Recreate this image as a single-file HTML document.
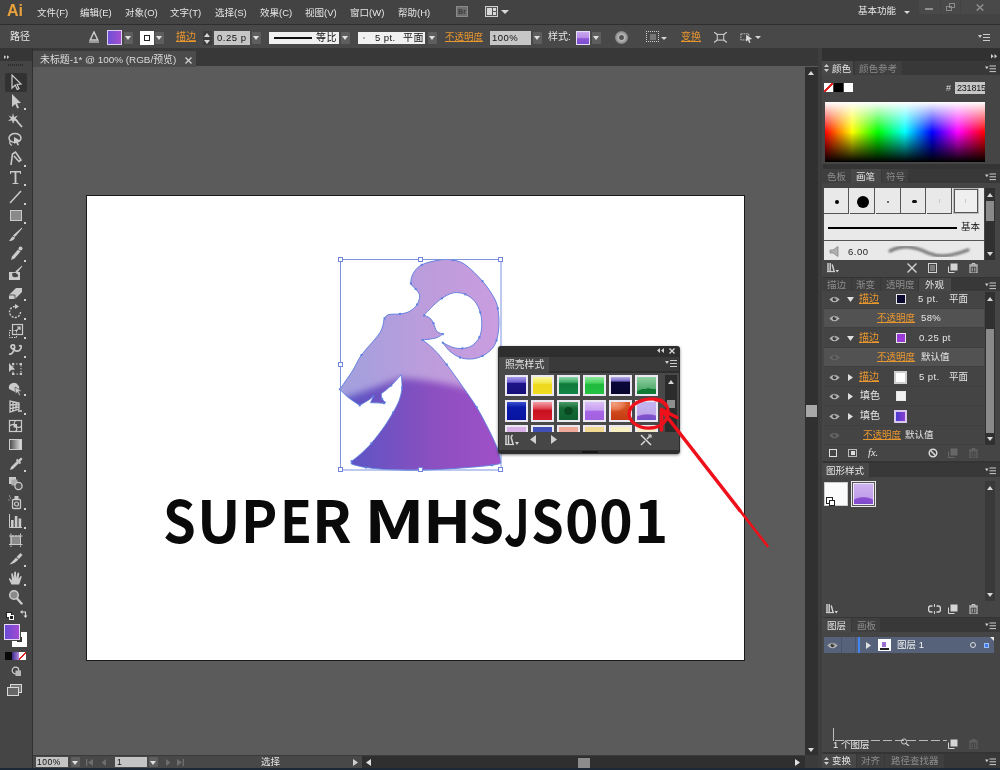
<!DOCTYPE html>
<html lang="zh-CN">
<head>
<meta charset="utf-8">
<title>未标题-1* @ 100% (RGB/预览)</title>
<style>
html,body{margin:0;padding:0;}
body{width:1000px;height:770px;overflow:hidden;background:#5b5b5b;position:relative;font-family:"Liberation Sans","Noto Sans CJK SC",sans-serif;font-size:12px;color:#e6e6e6;}
.abs{position:absolute;}
.t{position:absolute;white-space:nowrap;line-height:14px;font-size:10px;}
.or{color:#e8962e;text-decoration:underline;}
#menubar{left:0;top:0;width:1000px;height:24px;background:#434343;}
#ctrlbar{left:0;top:24px;width:1000px;height:24px;background:#484848;border-top:1px solid #2e2e2e;box-sizing:border-box;}
#tabbar{left:0;top:48px;width:822px;height:18px;background:#383838;}
#tab{left:33px;top:51px;width:163px;height:16px;background:#4b4b4b;}
#tools{left:0;top:48px;width:33px;height:722px;background:#454545;}
#canvas{left:33px;top:67px;width:772px;height:688px;background:#5b5b5b;}
#artboard{left:86px;top:195px;width:659px;height:466px;background:#fff;border:1px solid #1a1a1a;box-sizing:border-box;}
#vscroll{left:805px;top:67px;width:13px;height:688px;background:#303030;}
#status{left:33px;top:755px;width:785px;height:15px;background:#3b3b3b;}
#dock{left:818px;top:48px;width:182px;height:722px;background:#3a3a3a;}

.m{top:6px;font-size:9.5px;}
.tri{width:0;height:0;border-style:solid;border-color:#d8d8d8 transparent transparent transparent;border-width:4px 4px 0 4px;}
.tri.up{border-color:transparent transparent #d8d8d8 transparent;border-width:0 4px 4px 4px;}
.dd{width:9px;height:12px;background:#5e5e5e;border-radius:1px;}
.dd:after{content:"";position:absolute;left:1px;top:4px;border-style:solid;border-color:#e0e0e0 transparent transparent transparent;border-width:4px 3.5px 0 3.5px;}
.inp{height:14px;background:#c6c6c6;color:#111;font-size:9.5px;line-height:14px;padding-left:2px;box-sizing:border-box;white-space:nowrap;overflow:hidden;font-family:"Liberation Sans","Noto Sans CJK SC",sans-serif;letter-spacing:0.5px;}
.inp.w{background:#f0f0f0;padding:0;font-family:"Liberation Sans","Noto Sans CJK SC",sans-serif;font-size:10px;line-height:14px;overflow:visible;}
.bl{position:absolute;top:0;transform-origin:0 0;display:block;}
</style>
</head>
<body><div id="root" style="position:absolute;left:0;top:0;width:1000px;height:770px;will-change:transform;">
<div id="menubar" class="abs"></div>
<div id="ctrlbar" class="abs"></div>
<div id="tabbar" class="abs"></div>
<div id="canvas" class="abs"></div>
<div id="artboard" class="abs"></div>
<div id="tab" class="abs"></div>
<div id="tools" class="abs"></div>
<div id="vscroll" class="abs"></div>
<div id="status" class="abs"></div>
<div id="dock" class="abs"></div>

<div class="abs" style="left:7px;top:0px;font:bold 16px/21px 'Liberation Sans',sans-serif;color:#e9a23b;letter-spacing:0px;">Ai</div>
<div class="t m" style="left:37px;">文件(F)</div>
<div class="t m" style="left:80px;">编辑(E)</div>
<div class="t m" style="left:125px;">对象(O)</div>
<div class="t m" style="left:170px;">文字(T)</div>
<div class="t m" style="left:215px;">选择(S)</div>
<div class="t m" style="left:260px;">效果(C)</div>
<div class="t m" style="left:305px;">视图(V)</div>
<div class="t m" style="left:350px;">窗口(W)</div>
<div class="t m" style="left:398px;">帮助(H)</div>
<div class="abs" style="left:456px;top:6px;width:12px;height:11px;background:#6e6e6e;border:1px solid #8a8a8a;box-sizing:border-box;font:bold 7px/9px 'Liberation Sans',sans-serif;color:#3a3a3a;text-align:center;">Br</div>
<div class="abs" style="left:485px;top:6px;width:13px;height:11px;border:1px solid #cfcfcf;box-sizing:border-box;background:#555;"><div class="abs" style="left:1px;top:1px;width:5px;height:7px;background:#d8d8d8;"></div><div class="abs" style="left:7px;top:1px;width:3px;height:3px;background:#d8d8d8;"></div><div class="abs" style="left:7px;top:5px;width:3px;height:3px;background:#d8d8d8;"></div></div>
<div class="abs tri" style="left:501px;top:10px;"></div>
<div class="t" style="left:858px;top:4px;font-size:9.5px;">基本功能</div>
<div class="abs tri" style="left:904px;top:11px;border-width:3px 3px 0 3px;"></div>
<div class="abs" style="left:919px;top:0px;width:21px;height:14px;background:#494949;"></div>
<div class="abs" style="left:941px;top:0px;width:19px;height:14px;background:#494949;"></div>
<div class="abs" style="left:961px;top:0px;width:39px;height:14px;background:#494949;"></div>
<div class="abs" style="left:925px;top:8px;width:8px;height:2px;background:#8e8e8e;"></div>
<div class="abs" style="left:946px;top:6px;width:6px;height:5px;border:1.5px solid #8a8a8a;box-sizing:border-box;"></div>
<div class="abs" style="left:949px;top:3px;width:6px;height:5px;border:1.5px solid #8a8a8a;box-sizing:border-box;"></div>
<svg class="abs" style="left:976px;top:4px;" width="8" height="7" viewBox="0 0 8 7"><path d="M0.7 0.5 L7.3 6.5 M7.3 0.5 L0.7 6.5" stroke="#8c8c8c" stroke-width="1.6" fill="none"/></svg>


<div class="t" style="left:10px;top:30px;">路径</div>
<svg class="abs" style="left:89px;top:31px;" width="10" height="12" viewBox="0 0 10 12"><path d="M1.2 9 L5 1 L8.8 9 Z" fill="none" stroke="#d0d0d0" stroke-width="1.4"/><path d="M0 11 H10" stroke="#d0d0d0" stroke-width="1.2"/></svg>
<div class="abs" style="left:107px;top:30px;width:15px;height:15px;box-sizing:border-box;border:1px solid #d9d0f0;background:linear-gradient(90deg,#6e4fd6,#a44fd0);"></div>
<div class="abs dd" style="left:124px;top:32px;"></div>
<div class="abs" style="left:140px;top:31px;width:14px;height:14px;background:#fff;"><div class="abs" style="left:4px;top:4px;width:6px;height:6px;box-sizing:border-box;border:1px solid #222;"></div></div>
<div class="abs dd" style="left:155px;top:32px;"></div>
<div class="t or" style="left:176px;top:30px;">描边</div>
<div class="abs" style="left:203px;top:31px;width:9px;height:14px;background:#3c3c3c;"></div><div class="abs tri up" style="left:204px;top:33px;border-width:0 3.5px 4px 3.5px;"></div>
<div class="abs tri" style="left:204px;top:40px;border-width:4px 3.5px 0 3.5px;"></div>
<div class="abs inp" style="left:214px;top:31px;width:36px;padding-left:3px;">0.25 p</div>
<div class="abs dd" style="left:252px;top:32px;"></div>
<div class="abs inp w" style="left:269px;top:32px;width:70px;height:12px;"><div class="abs" style="left:5px;top:5px;width:38px;height:2px;background:#111;"></div><span class="abs" style="left:47px;top:-1px;">等比</span></div>
<div class="abs dd" style="left:341px;top:32px;"></div>
<div class="abs inp w" style="left:358px;top:32px;width:67px;height:12px;"><span class="abs" style="left:17px;top:-1px;font-family:'Liberation Sans','Noto Sans CJK SC',sans-serif;font-size:9.5px;letter-spacing:0.4px;">5 pt.</span><span class="abs" style="left:45px;top:-1px;">平面</span><span class="abs" style="left:5px;top:5px;width:2px;height:2px;background:#999;border-radius:1px;"></span></div>
<div class="abs dd" style="left:428px;top:32px;"></div>
<div class="t or" style="left:445px;top:30px;font-size:9.5px;">不透明度</div>
<div class="abs inp" style="left:490px;top:31px;width:41px;">100%</div>
<div class="abs dd" style="left:533px;top:32px;"></div>
<div class="t" style="left:548px;top:30px;">样式:</div>
<div class="abs" style="left:576px;top:31px;width:14px;height:14px;box-sizing:border-box;border:1px solid #e6dcf7;background:linear-gradient(180deg,#c9a8f0 0%,#b48ae6 50%,#8d55d6 55%,#7a4fd0 100%);"></div>
<div class="abs dd" style="left:592px;top:32px;"></div>
<div class="abs" style="left:615px;top:31px;width:13px;height:13px;border-radius:7px;background:radial-gradient(circle at 50% 50%,#555 0,#555 2px,#b8b8b8 3px,#8a8a8a 6px);"></div>
<div class="abs" style="left:646px;top:31px;width:13px;height:11px;box-sizing:border-box;border:1px dotted #d0d0d0;"><div class="abs" style="left:3px;top:2px;width:6px;height:6px;background:#777;"></div></div>
<div class="abs tri" style="left:661px;top:37px;border-width:3px 3px 0 3px;"></div>
<div class="t or" style="left:681px;top:30px;">变换</div>
<svg class="abs" style="left:714px;top:32px;" width="13" height="10.5" viewBox="0 0 16 13"><rect x="4" y="3" width="8" height="7" fill="none" stroke="#ccc" stroke-width="1.3"/><path d="M0 0 L4 3 M16 0 L12 3 M0 13 L4 10 M16 13 L12 10" stroke="#ccc" stroke-width="1.4"/></svg>
<svg class="abs" style="left:740px;top:32px;" width="14" height="11.5" viewBox="0 0 16 13"><rect x="1" y="2" width="9" height="7" fill="none" stroke="#ccc" stroke-width="1" stroke-dasharray="2 1"/><path d="M7 3 L14 8 L10.5 8.5 L12 12 L10.5 12.5 L9 9 L7 11 Z" fill="#ddd"/></svg>
<div class="abs tri" style="left:755px;top:36px;border-width:3.5px 3px 0 3px;"></div>
<svg class="abs" style="left:978px;top:33px;" width="12" height="9" viewBox="0 0 12 9"><path d="M0 2 L4 2 L2 5 Z" fill="#ccc"/><path d="M5 1.5 H12 M5 4.5 H12 M5 7.5 H12" stroke="#ccc" stroke-width="1"/></svg>


<div class="t" style="left:40px;top:53px;font-size:9.9px;color:#dcdcdc;">未标题-1* @ 100% (RGB/预览)</div>
<svg class="abs" style="left:185px;top:57px;" width="7" height="7" viewBox="0 0 7 7"><path d="M0.5 0.5 L6.5 6.5 M6.5 0.5 L0.5 6.5" stroke="#d0d0d0" stroke-width="1.3"/></svg>
<!--TOOLS_BEGIN-->
<div class="abs" style="left:0;top:48px;width:33px;height:13px;background:#363636;"></div>
<div class="abs" style="left:32px;top:48px;width:1px;height:722px;background:#2f2f2f;"></div>
<svg class="abs" style="left:4px;top:54.5px;" width="6" height="4" viewBox="0 0 8 5"><path d="M0 0 L3 2.5 L0 5 Z M4 0 L7 2.5 L4 5 Z" fill="#cfcfcf"/></svg>
<div class="abs" style="left:8px;top:64px;width:15px;height:2px;background:repeating-linear-gradient(90deg,#2a2a2a 0 1px,transparent 1px 2px);"></div>
<div class="abs" style="left:5px;top:73px;width:22px;height:19px;background:#323232;border-radius:2px;"></div>
<svg class="abs" style="left:6px;top:74px;" width="19" height="17" viewBox="0 0 19 17"><path d="M6 1 L6 14 L9.2 11 L11.2 15.5 L13 14.7 L11 10.3 L15 10 Z" fill="none" stroke="#cacaca" stroke-width="1.2"/></svg>
<svg class="abs" style="left:6px;top:93px;" width="19" height="17" viewBox="0 0 19 17"><path d="M6 1 L6 14 L9.2 11 L11.2 15.5 L13 14.7 L11 10.3 L15 10 Z" fill="#cacaca"/></svg>
<div class="abs" style="left:24px;top:108px;width:2px;height:2px;background:#cfcfcf;"></div>
<svg class="abs" style="left:6px;top:112px;" width="19" height="17" viewBox="0 0 19 17"><path d="M9 7 L16 15" stroke="#cacaca" stroke-width="1.8"/><path d="M7 1 L8 5 L12 3.5 L9.5 6.5 L12.5 9 L8.5 8.5 L7 12 L6 8.5 L2 9 L5 6.5 L2.5 3.5 L6 5 Z" fill="#cacaca"/></svg>
<svg class="abs" style="left:6px;top:131px;" width="19" height="17" viewBox="0 0 19 17"><ellipse cx="9" cy="7" rx="6" ry="4.5" fill="none" stroke="#cacaca" stroke-width="1.5"/><path d="M8 6 L15 10 L11.5 10.5 L13 14 L11.5 14.6 L10 11.2 L8 13 Z" fill="#cacaca"/><path d="M4 10 Q3 13 6 14.5" stroke="#cacaca" fill="none" stroke-width="1.2"/></svg>
<svg class="abs" style="left:6px;top:150px;" width="19" height="17" viewBox="0 0 19 17"><path d="M5 15 L6.5 4 L9.5 2 L15 10 L13 11.5 L8 6" fill="none" stroke="#cacaca" stroke-width="1.6"/></svg>
<div class="abs" style="left:24px;top:165px;width:2px;height:2px;background:#cfcfcf;"></div>
<svg class="abs" style="left:6px;top:169px;" width="19" height="17" viewBox="0 0 19 17"><path d="M4 2 H15 V5 H14 V3.4 H10.4 V14 H12.4 V15 H6.6 V14 H8.6 V3.4 H5 V5 H4 Z" fill="#cacaca"/></svg>
<div class="abs" style="left:24px;top:184px;width:2px;height:2px;background:#cfcfcf;"></div>
<svg class="abs" style="left:6px;top:188px;" width="19" height="17" viewBox="0 0 19 17"><path d="M4 15 L15 3" stroke="#cacaca" stroke-width="1.5"/></svg>
<div class="abs" style="left:24px;top:203px;width:2px;height:2px;background:#cfcfcf;"></div>
<svg class="abs" style="left:6px;top:207px;" width="19" height="17" viewBox="0 0 19 17"><rect x="4.5" y="3.5" width="11" height="10" fill="#8a8a8a" stroke="#cacaca" stroke-width="1"/></svg>
<div class="abs" style="left:24px;top:222px;width:2px;height:2px;background:#cfcfcf;"></div>
<svg class="abs" style="left:6px;top:226px;" width="19" height="17" viewBox="0 0 19 17"><path d="M16 2 L9 10.5 L7.5 9.5 Z" fill="#cacaca" stroke="#cacaca" stroke-width="1"/><path d="M3 15 Q7 15.5 9 12 Q8 10 6.5 10.5 Q5 12 3 15 Z" fill="#cacaca"/></svg>
<svg class="abs" style="left:6px;top:245px;" width="19" height="17" viewBox="0 0 19 17"><path d="M5 15 L6 11.5 L12 4.5 L14.5 6.5 L8.5 13.5 Z" fill="#cacaca"/><circle cx="14.5" cy="3.5" r="2" fill="#cacaca"/></svg>
<div class="abs" style="left:24px;top:260px;width:2px;height:2px;background:#cfcfcf;"></div>
<svg class="abs" style="left:6px;top:264px;" width="19" height="17" viewBox="0 0 19 17"><path d="M3 8 H14 V16 H3 Z" fill="#cacaca"/><path d="M6 9.5 Q9 8 11 10 Q13 11 12 12.5 Q9 14 6.5 12.5 Z" fill="#444"/><path d="M16 2 L11 8.5 L9.8 7.6 Z" fill="#cacaca" stroke="#cacaca"/></svg>
<svg class="abs" style="left:6px;top:284px;" width="19" height="17" viewBox="0 0 19 17"><path d="M3 11 L10 4 L16 4 L16 8 L9 15 L3 15 Z" fill="#cacaca"/><path d="M3 11 H9 V15" fill="none" stroke="#555" stroke-width="1"/></svg>
<div class="abs" style="left:24px;top:299px;width:2px;height:2px;background:#cfcfcf;"></div>
<svg class="abs" style="left:6px;top:303px;" width="19" height="17" viewBox="0 0 19 17"><path d="M14.5 9 A5.5 5.5 0 1 1 9 3.5" fill="none" stroke="#cacaca" stroke-width="1.4" stroke-dasharray="2 1.3"/><path d="M9 1 L13 3.5 L9 6 Z" fill="#cacaca"/></svg>
<div class="abs" style="left:24px;top:318px;width:2px;height:2px;background:#cfcfcf;"></div>
<svg class="abs" style="left:6px;top:322px;" width="19" height="17" viewBox="0 0 19 17"><rect x="3.5" y="8.5" width="7" height="7" fill="none" stroke="#cacaca" stroke-width="1" stroke-dasharray="1.5 1"/><rect x="6.5" y="2.5" width="10" height="10" fill="none" stroke="#cacaca" stroke-width="1.2"/><path d="M10 9 L14 5 M11 5 H14 V8" stroke="#cacaca" stroke-width="1.2" fill="none"/></svg>
<div class="abs" style="left:24px;top:337px;width:2px;height:2px;background:#cfcfcf;"></div>
<svg class="abs" style="left:6px;top:341px;" width="19" height="17" viewBox="0 0 19 17"><path d="M3 13 Q6 14 8 9 Q10 3 6 4 Q3 6 8 9 Q13 12 15 7 Q16 4 13 5" fill="none" stroke="#cacaca" stroke-width="1.8"/></svg>
<div class="abs" style="left:24px;top:356px;width:2px;height:2px;background:#cfcfcf;"></div>
<svg class="abs" style="left:6px;top:360px;" width="19" height="17" viewBox="0 0 19 17"><rect x="7" y="4" width="8" height="10" fill="none" stroke="#cacaca" stroke-width="1" stroke-dasharray="1.5 1.5"/><path d="M3 3 L3 12 L5.5 9.8 L9 9.5 Z" fill="#cacaca"/><rect x="6" y="3" width="2" height="2" fill="#cacaca"/><rect x="14" y="3" width="2" height="2" fill="#cacaca"/><rect x="14" y="13" width="2" height="2" fill="#cacaca"/><rect x="6" y="13" width="2" height="2" fill="#cacaca"/></svg>
<svg class="abs" style="left:6px;top:379px;" width="19" height="17" viewBox="0 0 19 17"><path d="M3 10 A5 5 0 0 1 12 6 A4 4 0 0 1 9 13 Z" fill="#cacaca"/><path d="M9 8 L16 12 L12.8 12.5 L14.5 16 L13 16.5 L11.5 13.3 L9.5 15 Z" fill="#cacaca" stroke="#444" stroke-width=".6"/></svg>
<div class="abs" style="left:24px;top:394px;width:2px;height:2px;background:#cfcfcf;"></div>
<svg class="abs" style="left:6px;top:398px;" width="19" height="17" viewBox="0 0 19 17"><path d="M4 3 V14 L13 11 V5 Z M4 6.5 L13 7 M4 10.5 L13 9 M7 3.6 V13 M10 4.3 V12" fill="none" stroke="#cacaca" stroke-width="1.3"/><path d="M12 13 H16" stroke="#cacaca" stroke-width="1.6"/></svg>
<div class="abs" style="left:24px;top:413px;width:2px;height:2px;background:#cfcfcf;"></div>
<svg class="abs" style="left:6px;top:417px;" width="19" height="17" viewBox="0 0 19 17"><rect x="3.5" y="3.5" width="12" height="11" fill="none" stroke="#cacaca" stroke-width="1.2"/><path d="M3.5 9 Q7 6 10 9 T15.5 9 M9.5 3.5 Q7 7 9.5 9.5 T9.5 14.5" fill="none" stroke="#cacaca" stroke-width="1.2"/><rect x="7.5" y="7" width="3.5" height="3.5" fill="#cacaca"/></svg>
<svg class="abs" style="left:6px;top:436px;" width="19" height="17" viewBox="0 0 19 17"><defs><linearGradient id="tg" x1="0" x2="1"><stop offset="0" stop-color="#4a4a4a"/><stop offset="1" stop-color="#e4e4e4"/></linearGradient></defs><rect x="3.5" y="3.5" width="12" height="10" fill="url(#tg)" stroke="#cacaca" stroke-width="1"/></svg>
<svg class="abs" style="left:6px;top:455px;" width="19" height="17" viewBox="0 0 19 17"><path d="M4 15 L5 12 L11 6 L13 8 L7 14 Z" fill="#cacaca"/><path d="M10.5 4.5 L14.5 8.5" stroke="#cacaca" stroke-width="1.8"/><path d="M12 5 L15 2.5 L16.5 4 L14 7 Z" fill="#cacaca"/></svg>
<div class="abs" style="left:24px;top:470px;width:2px;height:2px;background:#cfcfcf;"></div>
<svg class="abs" style="left:6px;top:474px;" width="19" height="17" viewBox="0 0 19 17"><rect x="3" y="3" width="7" height="7" fill="#cacaca"/><rect x="5.5" y="5.5" width="6" height="6" fill="#aaa"/><circle cx="12.5" cy="12" r="3.6" fill="#555" stroke="#cacaca" stroke-width="1.3"/></svg>
<svg class="abs" style="left:6px;top:493px;" width="19" height="17" viewBox="0 0 19 17"><rect x="6.5" y="6.5" width="8" height="9" rx="1" fill="none" stroke="#cacaca" stroke-width="1.3"/><rect x="8.5" y="3" width="4" height="3.5" fill="#cacaca"/><circle cx="10.5" cy="11" r="2" fill="none" stroke="#cacaca" stroke-width="1.2"/><path d="M3 3 h1 M4 5 h1 M2.5 7 h1" stroke="#cacaca" stroke-width="1"/></svg>
<div class="abs" style="left:24px;top:508px;width:2px;height:2px;background:#cfcfcf;"></div>
<svg class="abs" style="left:6px;top:512px;" width="19" height="17" viewBox="0 0 19 17"><path d="M3.5 2 V15.5 H16" fill="none" stroke="#cacaca" stroke-width="1"/><rect x="5" y="8" width="2.6" height="7" fill="#cacaca"/><rect x="8.8" y="4" width="2.6" height="11" fill="#cacaca"/><rect x="12.6" y="6.5" width="2.6" height="8.5" fill="#cacaca"/></svg>
<div class="abs" style="left:24px;top:527px;width:2px;height:2px;background:#cfcfcf;"></div>
<svg class="abs" style="left:6px;top:531px;" width="19" height="17" viewBox="0 0 19 17"><rect x="5" y="5" width="9.5" height="8.5" fill="#8a8a8a" stroke="#cacaca" stroke-width="1"/><path d="M3 5 H16.5 M3 13.5 H16.5 M5 2.5 V16 M14.5 2.5 V16" stroke="#cacaca" stroke-width="1" stroke-dasharray="2 1"/></svg>
<svg class="abs" style="left:6px;top:550px;" width="19" height="17" viewBox="0 0 19 17"><path d="M3.5 14.5 L10 7.5 L12.5 9.5 Q8 14 3.5 14.5 Z" fill="#cacaca"/><path d="M10.5 7 L14.5 3 L16.5 5 L13 9 Z" fill="#cacaca"/></svg>
<div class="abs" style="left:24px;top:565px;width:2px;height:2px;background:#cfcfcf;"></div>
<svg class="abs" style="left:6px;top:569px;" width="19" height="17" viewBox="0 0 19 17"><path d="M5.5 15.5 L3 10.5 Q2.6 9 4 9.3 L6 11.5 L5.2 4.8 Q5.8 3.6 6.8 4.6 L8 9 L8.2 3 Q9.2 1.9 10 3 L10.3 9 L11.6 3.8 Q12.7 3 13.2 4.2 L12.6 10 L14.6 7 Q15.9 6.7 15.6 8 L13.2 15.5 Z" fill="#cacaca"/></svg>
<div class="abs" style="left:24px;top:584px;width:2px;height:2px;background:#cfcfcf;"></div>
<svg class="abs" style="left:6px;top:588px;" width="19" height="17" viewBox="0 0 19 17"><circle cx="8" cy="7" r="4.3" fill="#8a8a8a" stroke="#cacaca" stroke-width="1.5"/><path d="M11 10.5 L15.5 15.5" stroke="#cacaca" stroke-width="2.4" stroke-linecap="round"/></svg>
<div class="abs" style="left:6px;top:612px;width:4px;height:4px;background:#fff;border:1px solid #222;"></div><div class="abs" style="left:9px;top:615px;width:3px;height:3px;border:1px solid #fff;background:#222;"></div>
<svg class="abs" style="left:20px;top:610px;" width="8" height="8" viewBox="0 0 8 8"><path d="M1.5 2 H5.5 V6" fill="none" stroke="#d8d8d8" stroke-width="1.2"/><path d="M0 2 L2.5 0 V4 Z M5.5 8 L3.5 5.5 H7.5 Z" fill="#d8d8d8"/></svg>
<div class="abs" style="left:12px;top:632px;width:15px;height:15px;background:#fff;"><div class="abs" style="left:5px;top:5px;width:5px;height:5px;background:#333;"></div></div>
<div class="abs" style="left:4px;top:624px;width:16px;height:16px;box-sizing:border-box;border:1px solid #e3d9f5;background:linear-gradient(90deg,#6a4bd4,#a24ad0);box-shadow:0 0 0 1px #444;"></div>
<div class="abs" style="left:5px;top:652px;width:7px;height:8px;background:#0a0a0a;"></div>
<div class="abs" style="left:12px;top:652px;width:7px;height:8px;background:linear-gradient(90deg,#3a2a8a,#b48ae0);"></div>
<div class="abs" style="left:19px;top:652px;width:7px;height:8px;background:linear-gradient(135deg,#fff 42%,#e02020 42%,#e02020 58%,#fff 58%);"></div>
<svg class="abs" style="left:11px;top:666px;" width="11" height="11" viewBox="0 0 11 11"><circle cx="4.5" cy="4.5" r="3.3" fill="none" stroke="#cfcfcf" stroke-width="1.2"/><rect x="4.5" y="4.5" width="5.5" height="5.5" fill="#b8b8b8"/></svg>
<svg class="abs" style="left:7px;top:684px;" width="16" height="12" viewBox="0 0 16 12"><rect x="3.5" y="0.5" width="11" height="8" fill="#777" stroke="#d8d8d8"/><rect x="0.5" y="3.5" width="11" height="8" fill="#666" stroke="#d8d8d8"/></svg>
<!--TOOLS_END-->
<!--ART_BEGIN-->
<svg class="abs" style="left:0;top:0;" width="1000" height="770" viewBox="0 0 1000 770">
<defs>
<linearGradient id="gd" x1="345" x2="500" y1="0" y2="0" gradientUnits="userSpaceOnUse"><stop offset="0" stop-color="#5a55c4"/><stop offset="0.55" stop-color="#8a4fc0"/><stop offset="1" stop-color="#a050c8"/></linearGradient>
<linearGradient id="gl" x1="0" x2="0" y1="365" y2="395" gradientUnits="userSpaceOnUse"><stop offset="0" stop-color="#fff" stop-opacity="0.45"/><stop offset="1" stop-color="#fff" stop-opacity="0"/></linearGradient>
<clipPath id="cp"><path d="M410.9 283.5 C410.5 280.9 411.4 276.5 413.2 273.4 C415.0 270.3 417.5 267.0 421.8 264.8 C426.1 262.6 433.8 260.9 439.0 260.1 C444.2 259.3 448.6 259.3 453.0 260.1 C457.4 260.9 460.5 261.3 465.4 264.8 C470.3 268.3 477.8 275.9 482.5 281.2 C487.2 286.5 490.9 292.2 493.5 296.7 C496.1 301.2 496.9 303.7 497.8 308.4 C498.7 313.1 499.2 319.5 499.0 324.8 C498.8 330.1 497.8 336.3 496.6 340.3 C495.4 344.3 494.2 346.3 491.9 348.9 C489.5 351.5 485.9 354.2 482.5 355.9 C479.1 357.6 475.4 358.7 471.6 359.0 C467.9 359.3 463.6 358.8 460.0 357.5 C456.4 356.2 452.7 353.7 449.8 351.2 C446.9 348.7 442.8 342.7 442.8 342.7 C442.8 342.7 449.8 346.4 453.0 347.4 C456.2 348.3 459.2 348.7 462.3 348.4 C465.4 348.1 468.9 347.7 471.7 345.8 C474.5 343.9 477.7 340.7 479.4 337.2 C481.1 333.7 481.7 328.9 481.8 324.8 C481.9 320.7 481.4 316.2 480.2 312.3 C479.0 308.4 477.3 304.4 474.8 301.4 C472.3 298.4 468.9 295.8 465.4 294.4 C461.9 293.0 457.6 292.1 453.7 292.8 C449.8 293.5 445.8 295.8 442.0 298.3 C438.2 300.8 434.2 304.8 431.2 307.6 C428.2 310.5 424.1 315.4 424.1 315.4 C424.1 315.4 428.0 316.5 429.6 317.8 C431.2 319.1 432.3 321.0 433.5 323.2 C434.7 325.4 435.1 329.2 436.6 331.0 C438.2 332.8 442.8 334.1 442.8 334.1 C442.8 334.1 439.2 337.0 435.8 338.0 C432.4 339.0 422.6 340.0 422.6 340.0 C422.6 340.0 430.3 345.6 434.3 349.7 C438.3 353.8 441.9 358.2 446.7 364.5 C451.5 370.8 458.2 380.3 463.2 387.4 C468.2 394.5 472.5 400.3 476.7 407.2 C480.9 414.1 484.9 421.9 488.4 428.8 C491.8 435.7 495.3 442.9 497.4 448.6 C499.5 454.3 501.0 463.0 501.0 463.0 C501.0 463.0 499.5 464.3 492.0 465.2 C484.5 466.1 468.0 467.6 456.0 468.4 C444.0 469.2 430.5 470.0 420.0 470.2 C409.5 470.4 402.0 470.2 393.0 469.8 C384.0 469.4 373.0 468.5 366.0 467.5 C359.0 466.5 351.2 463.9 351.2 463.9 C351.2 463.9 351.6 461.2 351.6 461.2 C351.6 461.2 357.3 457.0 360.6 454.0 C363.9 451.0 367.5 447.7 371.4 443.2 C375.3 438.7 380.4 432.1 384.0 427.0 C387.6 421.9 390.4 417.1 393.0 412.6 C395.6 408.1 397.8 404.2 399.3 400.0 C400.8 395.8 401.7 391.6 402.0 387.4 C402.3 383.2 401.1 374.8 401.1 374.8 C401.1 374.8 394.5 382.5 391.2 385.6 C387.9 388.8 381.3 393.7 381.3 393.7 C381.3 393.7 381.4 397.6 382.2 399.1 C383.0 400.6 386.0 402.5 386.0 402.5 C386.0 402.5 384.0 403.2 384.0 403.2 C384.0 403.2 370.5 402.7 370.5 402.7 C370.5 402.7 373.2 396.4 373.2 396.4 C373.2 396.4 370.9 398.5 368.7 400.0 C366.4 401.5 359.7 405.4 359.7 405.4 C359.7 405.4 351.3 400.0 348.0 397.3 C344.7 394.6 339.9 389.2 339.9 389.2 C339.9 389.2 349.4 375.7 353.0 370.0 C356.6 364.3 357.0 361.2 361.5 355.0 C366.0 348.8 376.2 338.6 380.0 332.5 C383.8 326.4 383.0 321.5 384.5 318.5 C386.0 315.5 386.4 315.4 389.0 314.6 C391.6 313.8 396.6 314.4 400.0 313.9 C403.4 313.4 406.4 313.1 409.3 311.5 C412.2 309.9 415.4 307.2 417.1 304.5 C418.8 301.8 419.8 297.8 419.5 295.2 C419.2 292.6 417.0 290.8 415.6 288.9 C414.2 286.9 411.3 286.1 410.9 283.5Z"/></clipPath>
<filter id="bl" x="-10%" y="-10%" width="120%" height="120%"><feGaussianBlur stdDeviation="3.5"/></filter>
</defs>
<g clip-path="url(#cp)">
<rect x="335" y="255" width="175" height="220" fill="url(#gd)"/>
<path d="M320 240 H525 V410 Q470 383 401 378 L334 402 L320 406 Z" fill="#fff" fill-opacity="0.44" filter="url(#bl)"/>
</g>
<path d="M410.9 283.5 C410.5 280.9 411.4 276.5 413.2 273.4 C415.0 270.3 417.5 267.0 421.8 264.8 C426.1 262.6 433.8 260.9 439.0 260.1 C444.2 259.3 448.6 259.3 453.0 260.1 C457.4 260.9 460.5 261.3 465.4 264.8 C470.3 268.3 477.8 275.9 482.5 281.2 C487.2 286.5 490.9 292.2 493.5 296.7 C496.1 301.2 496.9 303.7 497.8 308.4 C498.7 313.1 499.2 319.5 499.0 324.8 C498.8 330.1 497.8 336.3 496.6 340.3 C495.4 344.3 494.2 346.3 491.9 348.9 C489.5 351.5 485.9 354.2 482.5 355.9 C479.1 357.6 475.4 358.7 471.6 359.0 C467.9 359.3 463.6 358.8 460.0 357.5 C456.4 356.2 452.7 353.7 449.8 351.2 C446.9 348.7 442.8 342.7 442.8 342.7 C442.8 342.7 449.8 346.4 453.0 347.4 C456.2 348.3 459.2 348.7 462.3 348.4 C465.4 348.1 468.9 347.7 471.7 345.8 C474.5 343.9 477.7 340.7 479.4 337.2 C481.1 333.7 481.7 328.9 481.8 324.8 C481.9 320.7 481.4 316.2 480.2 312.3 C479.0 308.4 477.3 304.4 474.8 301.4 C472.3 298.4 468.9 295.8 465.4 294.4 C461.9 293.0 457.6 292.1 453.7 292.8 C449.8 293.5 445.8 295.8 442.0 298.3 C438.2 300.8 434.2 304.8 431.2 307.6 C428.2 310.5 424.1 315.4 424.1 315.4 C424.1 315.4 428.0 316.5 429.6 317.8 C431.2 319.1 432.3 321.0 433.5 323.2 C434.7 325.4 435.1 329.2 436.6 331.0 C438.2 332.8 442.8 334.1 442.8 334.1 C442.8 334.1 439.2 337.0 435.8 338.0 C432.4 339.0 422.6 340.0 422.6 340.0 C422.6 340.0 430.3 345.6 434.3 349.7 C438.3 353.8 441.9 358.2 446.7 364.5 C451.5 370.8 458.2 380.3 463.2 387.4 C468.2 394.5 472.5 400.3 476.7 407.2 C480.9 414.1 484.9 421.9 488.4 428.8 C491.8 435.7 495.3 442.9 497.4 448.6 C499.5 454.3 501.0 463.0 501.0 463.0 C501.0 463.0 499.5 464.3 492.0 465.2 C484.5 466.1 468.0 467.6 456.0 468.4 C444.0 469.2 430.5 470.0 420.0 470.2 C409.5 470.4 402.0 470.2 393.0 469.8 C384.0 469.4 373.0 468.5 366.0 467.5 C359.0 466.5 351.2 463.9 351.2 463.9 C351.2 463.9 351.6 461.2 351.6 461.2 C351.6 461.2 357.3 457.0 360.6 454.0 C363.9 451.0 367.5 447.7 371.4 443.2 C375.3 438.7 380.4 432.1 384.0 427.0 C387.6 421.9 390.4 417.1 393.0 412.6 C395.6 408.1 397.8 404.2 399.3 400.0 C400.8 395.8 401.7 391.6 402.0 387.4 C402.3 383.2 401.1 374.8 401.1 374.8 C401.1 374.8 394.5 382.5 391.2 385.6 C387.9 388.8 381.3 393.7 381.3 393.7 C381.3 393.7 381.4 397.6 382.2 399.1 C383.0 400.6 386.0 402.5 386.0 402.5 C386.0 402.5 384.0 403.2 384.0 403.2 C384.0 403.2 370.5 402.7 370.5 402.7 C370.5 402.7 373.2 396.4 373.2 396.4 C373.2 396.4 370.9 398.5 368.7 400.0 C366.4 401.5 359.7 405.4 359.7 405.4 C359.7 405.4 351.3 400.0 348.0 397.3 C344.7 394.6 339.9 389.2 339.9 389.2 C339.9 389.2 349.4 375.7 353.0 370.0 C356.6 364.3 357.0 361.2 361.5 355.0 C366.0 348.8 376.2 338.6 380.0 332.5 C383.8 326.4 383.0 321.5 384.5 318.5 C386.0 315.5 386.4 315.4 389.0 314.6 C391.6 313.8 396.6 314.4 400.0 313.9 C403.4 313.4 406.4 313.1 409.3 311.5 C412.2 309.9 415.4 307.2 417.1 304.5 C418.8 301.8 419.8 297.8 419.5 295.2 C419.2 292.6 417.0 290.8 415.6 288.9 C414.2 286.9 411.3 286.1 410.9 283.5Z" fill="none" stroke="#5b7fe0" stroke-width="0.9"/>
<g fill="#5b7fe0"><rect x="409.9" y="282.5" width="2" height="2"/><rect x="420.8" y="263.8" width="2" height="2"/><rect x="452.0" y="259.1" width="2" height="2"/><rect x="481.5" y="280.2" width="2" height="2"/><rect x="496.8" y="307.4" width="2" height="2"/><rect x="495.6" y="339.3" width="2" height="2"/><rect x="481.5" y="354.9" width="2" height="2"/><rect x="459.0" y="356.5" width="2" height="2"/><rect x="441.8" y="341.7" width="2" height="2"/><rect x="461.3" y="347.4" width="2" height="2"/><rect x="478.4" y="336.2" width="2" height="2"/><rect x="479.2" y="311.3" width="2" height="2"/><rect x="464.4" y="293.4" width="2" height="2"/><rect x="441.0" y="297.3" width="2" height="2"/><rect x="423.1" y="314.4" width="2" height="2"/><rect x="432.5" y="322.2" width="2" height="2"/><rect x="441.8" y="333.1" width="2" height="2"/><rect x="421.6" y="339.0" width="2" height="2"/><rect x="445.7" y="363.5" width="2" height="2"/><rect x="475.7" y="406.2" width="2" height="2"/><rect x="496.4" y="447.6" width="2" height="2"/><rect x="491.0" y="464.2" width="2" height="2"/><rect x="419.0" y="469.2" width="2" height="2"/><rect x="365.0" y="466.5" width="2" height="2"/><rect x="350.6" y="460.2" width="2" height="2"/><rect x="370.4" y="442.2" width="2" height="2"/><rect x="392.0" y="411.6" width="2" height="2"/><rect x="401.0" y="386.4" width="2" height="2"/><rect x="390.2" y="384.6" width="2" height="2"/><rect x="381.2" y="398.1" width="2" height="2"/><rect x="383.0" y="402.2" width="2" height="2"/><rect x="372.2" y="395.4" width="2" height="2"/><rect x="358.7" y="404.4" width="2" height="2"/><rect x="338.9" y="388.2" width="2" height="2"/><rect x="360.5" y="354.0" width="2" height="2"/><rect x="383.5" y="317.5" width="2" height="2"/><rect x="399.0" y="312.9" width="2" height="2"/><rect x="416.1" y="303.5" width="2" height="2"/><rect x="414.6" y="287.9" width="2" height="2"/></g>
<rect x="340.5" y="259.5" width="160.5" height="210.5" fill="none" stroke="#7d93e0" stroke-width="1"/>
<g fill="#fff" stroke="#6f86d8" stroke-width="1">
<rect x="338.5" y="257.5" width="4" height="4"/><rect x="418.5" y="257.5" width="4" height="4"/><rect x="498.5" y="257.5" width="4" height="4"/>
<rect x="338.5" y="362.5" width="4" height="4"/><rect x="498.5" y="362.5" width="4" height="4"/>
<rect x="338.5" y="467.5" width="4" height="4"/><rect x="418.5" y="467.5" width="4" height="4"/><rect x="498.5" y="467.5" width="4" height="4"/>
</g>
</svg>
<div class="abs" id="bigtext" style="left:0;top:474.5px;width:1000px;height:86px;font:bold 58.2px/86px 'Noto Sans CJK SC','Liberation Sans',sans-serif;color:#0a0a0a;white-space:pre;"><span class="bl" style="left:163.29px;transform:scaleX(0.903);">S</span><span class="bl" style="left:197.0px;transform:scaleX(1.0);">U</span><span class="bl" style="left:241.31px;transform:scaleX(0.938);">P</span><span class="bl" style="left:279.54px;transform:scaleX(0.893);">E</span><span class="bl" style="left:312.0px;transform:scaleX(1.0);">R</span><span class="bl" style="left:352px;"> </span><span class="bl" style="left:363.88px;transform:scaleX(1.225);">M</span><span class="bl" style="left:422.51px;transform:scaleX(1.097);">H</span><span class="bl" style="left:469.1px;transform:scaleX(0.968);">S</span><span class="bl" style="left:504.22px;top:-2.3px;transform:scale(0.778,1.092);">J</span><span class="bl" style="left:531.29px;transform:scaleX(0.903);">S</span><span class="bl" style="left:565.05px;transform:scaleX(0.977);">0</span><span class="bl" style="left:599.03px;transform:scaleX(0.983);">0</span><span class="bl" style="left:634.0px;transform:scaleX(1.0);">1</span></div>
<!--ART_END-->
<!--SP_BEGIN-->
<div class="abs" style="left:498px;top:346px;width:182px;height:108px;background:#2e2e2e;border-radius:3px;box-shadow:0 1px 3px rgba(0,0,0,.5);"></div>
<div class="abs" style="left:499px;top:357px;width:180px;height:14px;background:#3a3a3a;"></div>
<div class="abs" style="left:499px;top:357px;width:50px;height:16px;background:#494949;"></div>
<div class="t" style="left:505px;top:357.5px;font-size:9.8px;color:#e0e0e0;">照亮样式</div>
<svg class="abs" style="left:657px;top:348px;" width="8" height="5" viewBox="0 0 8 5"><path d="M3 0 L0 2.5 L3 5 Z M7 0 L4 2.5 L7 5 Z" fill="#cfcfcf"/></svg>
<svg class="abs" style="left:669px;top:348px;" width="6" height="6" viewBox="0 0 6 6"><path d="M0.5 0.5 L5.5 5.5 M5.5 0.5 L0.5 5.5" stroke="#d8d8d8" stroke-width="1.3"/></svg>
<svg class="abs" style="left:665px;top:359px;" width="12" height="9" viewBox="0 0 12 9"><path d="M0 2 L4 2 L2 5 Z" fill="#ccc"/><path d="M5 1.5 H12 M5 4.5 H12 M5 7.5 H12" stroke="#ccc" stroke-width="1"/></svg>
<div class="abs" style="left:499px;top:373px;width:180px;height:59px;background:#494949;overflow:hidden;" id="swc">
<div class="abs" style="left:5.5px;top:2px;width:23px;height:21px;box-sizing:border-box;border:2px solid #ece8f2;background:linear-gradient(180deg,#a79bea 0,#6e5fd0 30%,#1d1487 38%,#15107a 100%);"></div>
<div class="abs" style="left:31.5px;top:2px;width:23px;height:21px;box-sizing:border-box;border:2px solid #ece8f2;background:linear-gradient(180deg,#fbf6a0 0,#f4e94a 35%,#efd81c 45%,#f1dc22 100%);"></div>
<div class="abs" style="left:57.5px;top:2px;width:23px;height:21px;box-sizing:border-box;border:2px solid #ece8f2;background:linear-gradient(180deg,#8fd6a8 0,#3fae6a 30%,#0f7a3c 40%,#118445 100%);"></div>
<div class="abs" style="left:83.5px;top:2px;width:23px;height:21px;box-sizing:border-box;border:2px solid #ece8f2;background:linear-gradient(180deg,#8ee89a 0,#48d460 35%,#1fb83c 45%,#25c244 100%);"></div>
<div class="abs" style="left:109.5px;top:2px;width:23px;height:21px;box-sizing:border-box;border:2px solid #ece8f2;background:linear-gradient(180deg,#b9aee8 0,#7a6ec8 22%,#0b0838 32%,#08062e 100%);"></div>
<div class="abs" style="left:135.5px;top:2px;width:23px;height:21px;box-sizing:border-box;border:2px solid #ece8f2;background:radial-gradient(ellipse 120% 70% at 60% 110%,#0f7a34 0,#0f7a34 60%,transparent 62%),linear-gradient(180deg,#8fd0a0 0,#3c9e5c 100%);"></div>
<div class="abs" style="left:5.5px;top:27px;width:23px;height:22px;box-sizing:border-box;border:2px solid #ece8f2;background:linear-gradient(180deg,#3a50d0 0,#0a1aa8 30%,#0614a0 100%);"></div>
<div class="abs" style="left:31.5px;top:27px;width:23px;height:22px;box-sizing:border-box;border:2px solid #ece8f2;background:linear-gradient(180deg,#f4a0a8 0,#e04858 35%,#c8101e 48%,#d21a2a 100%);"></div>
<div class="abs" style="left:57.5px;top:27px;width:23px;height:22px;box-sizing:border-box;border:2px solid #ece8f2;background:radial-gradient(circle at 50% 50%,#0a4a22 0,#0a4a22 30%,transparent 34%),linear-gradient(180deg,#4c9a68 0,#136a36 35%,#0f6030 100%);"></div>
<div class="abs" style="left:83.5px;top:27px;width:23px;height:22px;box-sizing:border-box;border:2px solid #ece8f2;background:linear-gradient(180deg,#dcc0f8 0,#c8a0f0 45%,#a866e6 52%,#a060e0 100%);"></div>
<div class="abs" style="left:109.5px;top:27px;width:23px;height:22px;box-sizing:border-box;border:2px solid #ece8f2;background:radial-gradient(ellipse 90% 60% at 20% 10%,#f0a080 0,#e87850 50%,transparent 75%),linear-gradient(180deg,#d85a28 0,#c43a10 100%);"></div>
<div class="abs" style="left:135.5px;top:27px;width:23px;height:22px;box-sizing:border-box;border:2px solid #ece8f2;background:radial-gradient(ellipse 130% 75% at 55% 118%,#6250c8 0,#8452cc 62%,transparent 70%),linear-gradient(180deg,#c4b6f0 0,#bb9fe8 100%);"></div>
<div class="abs" style="left:5.5px;top:52px;width:23px;height:21px;box-sizing:border-box;border:2px solid #ece8f2;background:#d8b0e8;"></div>
<div class="abs" style="left:31.5px;top:52px;width:23px;height:21px;box-sizing:border-box;border:2px solid #ece8f2;background:#4050b8;"></div>
<div class="abs" style="left:57.5px;top:52px;width:23px;height:21px;box-sizing:border-box;border:2px solid #ece8f2;background:#f0a898;"></div>
<div class="abs" style="left:83.5px;top:52px;width:23px;height:21px;box-sizing:border-box;border:2px solid #ece8f2;background:#f0d890;"></div>
<div class="abs" style="left:109.5px;top:52px;width:23px;height:21px;box-sizing:border-box;border:2px solid #ece8f2;background:#f8f0c0;"></div>
<div class="abs" style="left:135.5px;top:52px;width:23px;height:21px;box-sizing:border-box;border:2px solid #ece8f2;background:#f4ecc8;"></div>
<div class="abs" style="left:166px;top:2px;width:12px;height:57px;background:#2c2c2c;"></div>
<div class="abs tri up" style="left:168.5px;top:7px;border-width:0 3.5px 4px 3.5px;"></div>
<div class="abs" style="left:168px;top:27px;width:8px;height:8px;background:#8e8e8e;"></div>
</div>
<div class="abs" style="left:499px;top:432px;width:180px;height:18px;background:#464646;"></div>
<svg class="abs" style="left:505px;top:434px;" width="16" height="12" viewBox="0 0 16 12"><path d="M1 1 V10 M3.5 1 V10 M6 3 L8 10 M6 3 L7.5 1" stroke="#d4d4d4" stroke-width="1.5" fill="none"/><path d="M0 10.5 H9" stroke="#d4d4d4" stroke-width="1.2"/><path d="M10 8 L14 8 L12 11 Z" fill="#d4d4d4"/></svg>
<svg class="abs" style="left:530px;top:435px;" width="6" height="9" viewBox="0 0 6 9"><path d="M6 0 L0 4.5 L6 9 Z" fill="#cfcfcf"/></svg>
<svg class="abs" style="left:551px;top:435px;" width="6" height="9" viewBox="0 0 6 9"><path d="M0 0 L6 4.5 L0 9 Z" fill="#cfcfcf"/></svg>
<svg class="abs" style="left:640px;top:434px;" width="12" height="12" viewBox="0 0 12 12"><path d="M1 1 L11 11 M11 1 L7 5 M5 7 L1 11" stroke="#d8d8d8" stroke-width="1.5"/><path d="M8 1 H11 V4" stroke="#d8d8d8" fill="none"/></svg>
<div class="abs" style="left:582px;top:451px;width:16px;height:2px;background:#161616;border-radius:1px;"></div>
<svg class="abs" style="left:0;top:0;pointer-events:none;" width="1000" height="770" viewBox="0 0 1000 770"><g fill="none" stroke="#ee101a" stroke-linecap="round" stroke-linejoin="round"><path d="M662 400.5 C650 396.5 632.5 400.5 629.5 411 C627 421 638 428.5 650 428 C662 427.5 669 420 668 410 C667 404 663 400.5 655 399.5" stroke-width="3.3"/><path d="M767.5 546 L740 510.6" stroke-width="2.6"/><path d="M740 510.6 L662.5 411" stroke-width="3.5"/><path d="M677 417.5 L661.5 409.5 L661.5 430" stroke-width="3.6"/></g></svg>
<!--SP_END-->
<!--DK_BEGIN-->
<div class="abs" style="left:818px;top:48px;width:182px;height:722px;background:#343434;"></div>
<div class="abs" style="left:818px;top:48px;width:5px;height:722px;background:#3e3e3e;"></div>
<div class="abs" style="left:822px;top:48px;width:178px;height:13px;background:#313131;"></div>
<svg class="abs" style="left:991px;top:54px;" width="7" height="4.5" viewBox="0 0 8 5"><path d="M0 0 L3 2.5 L0 5 Z M4 0 L7 2.5 L4 5 Z" fill="#cfcfcf"/></svg>
<div class="abs" style="left:822px;top:61px;width:178px;height:14px;background:#383838;"></div><div class="abs" style="left:822px;top:61px;width:31px;height:15px;background:#484848;"></div><div class="t" style="left:832px;top:62px;font-size:9.5px;color:#e4e4e4;">颜色</div><div class="abs" style="left:855px;top:61px;width:47px;height:14px;background:#3f3f3f;"></div><div class="t" style="left:859px;top:62px;font-size:9.5px;color:#8c8c8c;">颜色参考</div><svg class="abs" style="left:985px;top:65px;" width="11" height="8" viewBox="0 0 11 8"><path d="M0 1.5 L3.6 1.5 L1.8 4.2 Z" fill="#ccc"/><path d="M4.5 1 H11 M4.5 3.8 H11 M4.5 6.6 H11" stroke="#ccc" stroke-width="1"/></svg>
<svg class="abs" style="left:824px;top:64px;" width="5" height="8" viewBox="0 0 5 8"><path d="M2.5 0 L5 3 H0 Z M2.5 8 L5 5 H0 Z" fill="#ccc"/></svg>
<div class="abs" style="left:822px;top:75px;width:178px;height:89px;background:#454545;"></div>
<div class="abs" style="left:824px;top:83px;width:9px;height:9px;background:linear-gradient(135deg,#fff 40%,#e02020 40%,#e02020 60%,#fff 60%);"></div>
<div class="abs" style="left:834px;top:83px;width:9px;height:9px;background:#000;"></div>
<div class="abs" style="left:844px;top:83px;width:9px;height:9px;background:#fff;"></div>
<div class="t" style="left:946px;top:81px;font-size:9px;color:#ddd;">#</div>
<div class="abs inp" style="left:955px;top:82px;width:30px;height:12px;line-height:12px;font-size:9px;letter-spacing:-0.2px;">231815</div>
<div class="abs" style="left:825px;top:102px;width:160px;height:60px;background:linear-gradient(180deg,rgba(255,255,255,1) 0,rgba(255,255,255,0) 50%,rgba(0,0,0,0) 50%,rgba(0,0,0,1) 100%),linear-gradient(90deg,#f00 0,#ff0 17%,#0f0 33%,#0ff 50%,#00f 67%,#f0f 83%,#f00 100%);"></div>
<div class="abs" style="left:822px;top:169px;width:178px;height:14px;background:#383838;"></div><div class="abs" style="left:822px;top:169px;width:29px;height:14px;background:#3f3f3f;"></div><div class="t" style="left:827px;top:170px;font-size:9.5px;color:#8c8c8c;">色板</div><div class="abs" style="left:851px;top:169px;width:30px;height:15px;background:#484848;"></div><div class="t" style="left:856px;top:170px;font-size:9.5px;color:#e4e4e4;">画笔</div><div class="abs" style="left:882px;top:169px;width:26px;height:14px;background:#3f3f3f;"></div><div class="t" style="left:886px;top:170px;font-size:9.5px;color:#8c8c8c;">符号</div><svg class="abs" style="left:985px;top:173px;" width="11" height="8" viewBox="0 0 11 8"><path d="M0 1.5 L3.6 1.5 L1.8 4.2 Z" fill="#ccc"/><path d="M4.5 1 H11 M4.5 3.8 H11 M4.5 6.6 H11" stroke="#ccc" stroke-width="1"/></svg>
<div class="abs" style="left:822px;top:183px;width:178px;height:94px;background:#454545;"></div>
<div class="abs" style="left:824px;top:188px;width:160px;height:72px;background:#e9e9e9;"></div>
<div class="abs" style="left:824.0px;top:188px;width:25px;height:26px;box-sizing:border-box;border-right:1px solid #555;border-bottom:1px solid #555;"></div>
<div class="abs" style="left:849.8px;top:188px;width:25px;height:26px;box-sizing:border-box;border-right:1px solid #555;border-bottom:1px solid #555;"></div>
<div class="abs" style="left:875.6px;top:188px;width:25px;height:26px;box-sizing:border-box;border-right:1px solid #555;border-bottom:1px solid #555;"></div>
<div class="abs" style="left:901.4px;top:188px;width:25px;height:26px;box-sizing:border-box;border-right:1px solid #555;border-bottom:1px solid #555;"></div>
<div class="abs" style="left:927.2px;top:188px;width:25px;height:26px;box-sizing:border-box;border-right:1px solid #555;border-bottom:1px solid #555;"></div>
<div class="abs" style="left:953.0px;top:188px;width:25px;height:26px;box-sizing:border-box;border-right:1px solid #555;border-bottom:1px solid #555;"></div>
<div class="abs" style="left:953.5px;top:189px;width:24px;height:24px;box-sizing:border-box;border:1px solid #555;background:#efefef;box-shadow:0 0 0 1px #bbb;"></div>
<div class="abs" style="left:835px;top:199.5px;width:4px;height:4px;border-radius:2px;background:#000;"></div>
<div class="abs" style="left:856.5px;top:195.5px;width:12px;height:12px;border-radius:6px;background:#000;"></div>
<div class="abs" style="left:887px;top:200.5px;width:2px;height:2px;border-radius:1px;background:#444;"></div>
<div class="abs" style="left:912px;top:200px;width:5px;height:3px;border-radius:2px;background:#111;"></div>
<div class="abs" style="left:939px;top:199px;width:1px;height:4px;background:#c8c8c8;"></div>
<div class="abs" style="left:965px;top:199px;width:1px;height:4px;background:#c8c8c8;"></div>
<div class="abs" style="left:824px;top:240px;width:160px;height:1px;background:#555;"></div>
<div class="abs" style="left:828px;top:227px;width:129px;height:1.5px;background:#000;"></div>
<div class="t" style="left:961px;top:220px;font-size:9.5px;color:#111;">基本</div>
<svg class="abs" style="left:829px;top:246px;" width="13" height="11" viewBox="0 0 13 11"><path d="M1 4 H4 L9 0.5 V10.5 L4 7 H1 Z" fill="#b0b0b0" stroke="#888" stroke-width=".8"/></svg>
<div class="t" style="left:848px;top:245px;font-size:9.5px;color:#222;letter-spacing:0.5px;">6.00</div>
<svg class="abs" style="left:886px;top:244px;" width="86" height="16" viewBox="0 0 86 16"><defs><filter id="bb"><feGaussianBlur stdDeviation="0.8"/></filter></defs><path d="M4 7 C18 0 30 3 42 9 C54 14 66 12 82 6" fill="none" stroke="#666" stroke-width="3.2" stroke-linecap="round" filter="url(#bb)" opacity=".85"/></svg>
<div class="abs" style="left:985px;top:188px;width:10px;height:72px;background:#303030;"></div><div class="abs tri up" style="left:987.0px;top:193px;border-width:0 3px 4px 3px;"></div><div class="abs tri" style="left:987.0px;top:252px;border-width:4px 3px 0 3px;"></div><div class="abs" style="left:986px;top:201px;width:8px;height:20px;background:#8a8a8a;"></div>
<svg class="abs" style="left:827px;top:263px;" width="13" height="10" viewBox="0 0 13 10"><path d="M1 0 V8 M3.2 0 V8 M5.2 1.5 L7 8" stroke="#d4d4d4" stroke-width="1.4" fill="none"/><path d="M0 8.6 H8" stroke="#d4d4d4" stroke-width="1.1"/><path d="M8.5 7 L12 7 L10.2 9.6 Z" fill="#d4d4d4"/></svg>
<svg class="abs" style="left:907px;top:263px;" width="10" height="10" viewBox="0 0 10 10"><path d="M0.5 0.5 L9.5 9.5 M9.5 0.5 L0.5 9.5" stroke="#d4d4d4" stroke-width="1.4"/></svg>
<svg class="abs" style="left:928px;top:263px;" width="9" height="10" viewBox="0 0 9 10"><rect x="0.5" y="0.5" width="8" height="9" fill="none" stroke="#d4d4d4"/><path d="M2 3 H7 M2 5 H7 M2 7 H7" stroke="#d4d4d4" stroke-width=".8"/></svg>
<svg class="abs" style="left:948px;top:263px;" width="10" height="10" viewBox="0 0 10 10"><path d="M0.5 3.5 V9.5 H6.5" fill="none" stroke="#d4d4d4"/><rect x="2.5" y="0.5" width="7" height="7" fill="#d4d4d4"/></svg>
<svg class="abs" style="left:969px;top:263px;" width="9" height="10" viewBox="0 0 9 10"><path d="M0 2 H9 M3 2 V0.6 H6 V2" stroke="#d4d4d4" fill="none"/><path d="M1 3 H8 V10 H1 Z" fill="none" stroke="#d4d4d4"/><path d="M3.2 4.5 V8.5 M5.8 4.5 V8.5" stroke="#d4d4d4" stroke-width=".8"/></svg>
<div class="abs" style="left:822px;top:278px;width:178px;height:13px;background:#383838;"></div><div class="abs" style="left:822px;top:278px;width:29px;height:13px;background:#3f3f3f;"></div><div class="t" style="left:827px;top:278px;font-size:9.5px;color:#8c8c8c;">描边</div><div class="abs" style="left:852px;top:278px;width:28px;height:13px;background:#3f3f3f;"></div><div class="t" style="left:856px;top:278px;font-size:9.5px;color:#8c8c8c;">渐变</div><div class="abs" style="left:881px;top:278px;width:37px;height:13px;background:#3f3f3f;"></div><div class="t" style="left:886px;top:278px;font-size:9.5px;color:#8c8c8c;">透明度</div><div class="abs" style="left:919px;top:278px;width:32px;height:14px;background:#484848;"></div><div class="t" style="left:925px;top:278px;font-size:9.5px;color:#e4e4e4;">外观</div><svg class="abs" style="left:985px;top:282px;" width="11" height="8" viewBox="0 0 11 8"><path d="M0 1.5 L3.6 1.5 L1.8 4.2 Z" fill="#ccc"/><path d="M4.5 1 H11 M4.5 3.8 H11 M4.5 6.6 H11" stroke="#ccc" stroke-width="1"/></svg>
<div class="abs" style="left:822px;top:291px;width:178px;height:170px;background:#454545;"></div>
<div class="abs" style="left:824px;top:292px;width:160px;height:153px;background:#444;overflow:hidden;" id="apl">
<div class="abs" style="left:0;top:-2.5px;width:160px;height:19px;background:#444;border-bottom:1px solid #3f3f3f;box-sizing:border-box;"></div>
<svg class="abs" style="left:5px;top:3.5px;" width="11" height="7" viewBox="0 0 11 7"><path d="M0.3 3.5 Q5.5 -2 10.7 3.5 Q5.5 9 0.3 3.5 Z" fill="#b4b4b4"/><circle cx="5.5" cy="3.3" r="1.9" fill="#3a3a3a"/><circle cx="6.2" cy="2.6" r="0.7" fill="#b4b4b4"/></svg>
<svg class="abs" style="left:23px;top:4.5px;" width="7" height="5" viewBox="0 0 7 5"><path d="M0 0 L7 0 L3.5 5 Z" fill="#e0e0e0"/></svg>
<div class="t or" style="left:35px;top:-0.5px;">描边</div>
<div class="abs" style="left:72px;top:1.5px;width:10px;height:10px;box-sizing:border-box;border:1.5px solid #e8e8e8;background:#0c0a30;"></div>
<div class="t" style="left:94px;top:-0.5px;font-family:'Liberation Sans','Noto Sans CJK SC',sans-serif;font-size:9.5px;letter-spacing:0.4px;">5 pt.<span style="position:absolute;left:31px;top:0;letter-spacing:0;">平面</span></div>
<div class="abs" style="left:0;top:17px;width:160px;height:19px;background:#525252;border-bottom:1px solid #3f3f3f;box-sizing:border-box;"></div>
<svg class="abs" style="left:5px;top:23px;" width="11" height="7" viewBox="0 0 11 7"><path d="M0.3 3.5 Q5.5 -2 10.7 3.5 Q5.5 9 0.3 3.5 Z" fill="#b4b4b4"/><circle cx="5.5" cy="3.3" r="1.9" fill="#3a3a3a"/><circle cx="6.2" cy="2.6" r="0.7" fill="#b4b4b4"/></svg>
<div class="t or" style="left:53px;top:19px;font-size:9.5px;">不透明度</div>
<div class="t" style="left:97px;top:19px;font-family:'Liberation Sans','Noto Sans CJK SC',sans-serif;font-size:9.5px;letter-spacing:0.4px;">58%</div>
<div class="abs" style="left:0;top:36.5px;width:160px;height:19px;background:#444;border-bottom:1px solid #3f3f3f;box-sizing:border-box;"></div>
<svg class="abs" style="left:5px;top:42.5px;" width="11" height="7" viewBox="0 0 11 7"><path d="M0.3 3.5 Q5.5 -2 10.7 3.5 Q5.5 9 0.3 3.5 Z" fill="#b4b4b4"/><circle cx="5.5" cy="3.3" r="1.9" fill="#3a3a3a"/><circle cx="6.2" cy="2.6" r="0.7" fill="#b4b4b4"/></svg>
<svg class="abs" style="left:23px;top:43.5px;" width="7" height="5" viewBox="0 0 7 5"><path d="M0 0 L7 0 L3.5 5 Z" fill="#e0e0e0"/></svg>
<div class="t or" style="left:35px;top:38.5px;">描边</div>
<div class="abs" style="left:72px;top:40.5px;width:10px;height:10px;box-sizing:border-box;border:1.5px solid #e8e8e8;background:#9a3ad8;"></div>
<div class="t" style="left:95px;top:38.5px;font-family:'Liberation Sans','Noto Sans CJK SC',sans-serif;font-size:9.5px;letter-spacing:0.4px;">0.25 pt</div>
<div class="abs" style="left:0;top:56px;width:160px;height:19px;background:#525252;border-bottom:1px solid #3f3f3f;box-sizing:border-box;"></div>
<svg class="abs" style="left:5px;top:62px;" width="11" height="7" viewBox="0 0 11 7"><path d="M0.3 3.5 Q5.5 -2 10.7 3.5 Q5.5 9 0.3 3.5 Z" fill="#666"/><circle cx="5.5" cy="3.3" r="1.9" fill="#4a4a4a"/><circle cx="6.2" cy="2.6" r="0.7" fill="#666"/></svg>
<div class="t or" style="left:53px;top:58px;font-size:9.5px;">不透明度</div>
<div class="t" style="left:97px;top:58px;font-size:9.5px;">默认值</div>
<div class="abs" style="left:0;top:75.5px;width:160px;height:19px;background:#444;border-bottom:1px solid #3f3f3f;box-sizing:border-box;"></div>
<svg class="abs" style="left:5px;top:81.5px;" width="11" height="7" viewBox="0 0 11 7"><path d="M0.3 3.5 Q5.5 -2 10.7 3.5 Q5.5 9 0.3 3.5 Z" fill="#b4b4b4"/><circle cx="5.5" cy="3.3" r="1.9" fill="#3a3a3a"/><circle cx="6.2" cy="2.6" r="0.7" fill="#b4b4b4"/></svg>
<svg class="abs" style="left:24px;top:81.5px;" width="5" height="7" viewBox="0 0 5 7"><path d="M0 0 L5 3.5 L0 7 Z" fill="#e0e0e0"/></svg>
<div class="t or" style="left:35px;top:77.5px;">描边</div>
<div class="abs" style="left:70px;top:78.5px;width:13px;height:13px;box-sizing:border-box;border:2px solid #d0d0d0;background:#fff;"></div>
<div class="t" style="left:95px;top:77.5px;font-family:'Liberation Sans','Noto Sans CJK SC',sans-serif;font-size:9.5px;letter-spacing:0.4px;">5 pt.<span style="position:absolute;left:30px;top:0;letter-spacing:0;">平面</span></div>
<div class="abs" style="left:0;top:95px;width:160px;height:19px;background:#444;border-bottom:1px solid #3f3f3f;box-sizing:border-box;"></div>
<svg class="abs" style="left:5px;top:101px;" width="11" height="7" viewBox="0 0 11 7"><path d="M0.3 3.5 Q5.5 -2 10.7 3.5 Q5.5 9 0.3 3.5 Z" fill="#b4b4b4"/><circle cx="5.5" cy="3.3" r="1.9" fill="#3a3a3a"/><circle cx="6.2" cy="2.6" r="0.7" fill="#b4b4b4"/></svg>
<svg class="abs" style="left:24px;top:101px;" width="5" height="7" viewBox="0 0 5 7"><path d="M0 0 L5 3.5 L0 7 Z" fill="#e0e0e0"/></svg>
<div class="t" style="left:36px;top:97px;">填色</div>
<div class="abs" style="left:72px;top:99px;width:10px;height:10px;box-sizing:border-box;border:1.5px solid #e8e8e8;background:#f2f2f2;"></div>
<div class="abs" style="left:0;top:114.5px;width:160px;height:19px;background:#444;border-bottom:1px solid #3f3f3f;box-sizing:border-box;"></div>
<svg class="abs" style="left:5px;top:120.5px;" width="11" height="7" viewBox="0 0 11 7"><path d="M0.3 3.5 Q5.5 -2 10.7 3.5 Q5.5 9 0.3 3.5 Z" fill="#b4b4b4"/><circle cx="5.5" cy="3.3" r="1.9" fill="#3a3a3a"/><circle cx="6.2" cy="2.6" r="0.7" fill="#b4b4b4"/></svg>
<svg class="abs" style="left:24px;top:120.5px;" width="5" height="7" viewBox="0 0 5 7"><path d="M0 0 L5 3.5 L0 7 Z" fill="#e0e0e0"/></svg>
<div class="t" style="left:36px;top:116.5px;">填色</div>
<div class="abs" style="left:70px;top:117.5px;width:13px;height:13px;box-sizing:border-box;border:2px solid #d8c8f0;background:linear-gradient(90deg,#4a3ad0,#8a40d0);"></div>
<div class="abs" style="left:0;top:134px;width:160px;height:19px;background:#444;border-bottom:1px solid #3f3f3f;box-sizing:border-box;"></div>
<svg class="abs" style="left:5px;top:140px;" width="11" height="7" viewBox="0 0 11 7"><path d="M0.3 3.5 Q5.5 -2 10.7 3.5 Q5.5 9 0.3 3.5 Z" fill="#666"/><circle cx="5.5" cy="3.3" r="1.9" fill="#4a4a4a"/><circle cx="6.2" cy="2.6" r="0.7" fill="#666"/></svg>
<div class="t or" style="left:39px;top:136px;font-size:9.5px;">不透明度</div>
<div class="t" style="left:81px;top:136px;font-size:9.5px;">默认值</div>
</div>
<div class="abs" style="left:985px;top:292px;width:10px;height:153px;background:#303030;"></div><div class="abs tri up" style="left:987.0px;top:297px;border-width:0 3px 4px 3px;"></div><div class="abs tri" style="left:987.0px;top:437px;border-width:4px 3px 0 3px;"></div><div class="abs" style="left:986px;top:329px;width:8px;height:104px;background:#8a8a8a;"></div>
<div class="abs" style="left:829px;top:449px;width:8px;height:8px;box-sizing:border-box;border:1.3px solid #e0e0e0;"></div>
<div class="abs" style="left:848px;top:449px;width:9px;height:8px;box-sizing:border-box;border:1px solid #bbb;"><div class="abs" style="left:1.5px;top:1px;width:4px;height:4px;background:#ddd;"></div></div>
<div class="t" style="left:868px;top:446px;font:italic 10.5px/14px 'Liberation Serif',serif;color:#e4e4e4;">fx.</div>
<svg class="abs" style="left:928px;top:448px;" width="10" height="10" viewBox="0 0 10 10"><circle cx="5" cy="5" r="3.8" fill="none" stroke="#d8d8d8" stroke-width="1.5"/><path d="M2.3 2.3 L7.7 7.7" stroke="#d8d8d8" stroke-width="1.5"/></svg>
<svg class="abs" style="left:948px;top:448px;" width="10" height="10" viewBox="0 0 10 10"><path d="M0.5 3.5 V9.5 H6.5" fill="none" stroke="#686868"/><rect x="2.5" y="0.5" width="7" height="7" fill="#686868"/></svg>
<svg class="abs" style="left:969px;top:448px;" width="9" height="10" viewBox="0 0 9 10"><path d="M0 2 H9 M3 2 V0.6 H6 V2" stroke="#686868" fill="none"/><path d="M1 3 H8 V10 H1 Z" fill="none" stroke="#686868"/><path d="M3.2 4.5 V8.5 M5.8 4.5 V8.5" stroke="#686868" stroke-width=".8"/></svg>
<div class="abs" style="left:822px;top:463px;width:178px;height:14px;background:#383838;"></div><div class="abs" style="left:822px;top:463px;width:47px;height:15px;background:#484848;"></div><div class="t" style="left:826px;top:464px;font-size:9.5px;color:#e4e4e4;">图形样式</div><svg class="abs" style="left:985px;top:467px;" width="11" height="8" viewBox="0 0 11 8"><path d="M0 1.5 L3.6 1.5 L1.8 4.2 Z" fill="#ccc"/><path d="M4.5 1 H11 M4.5 3.8 H11 M4.5 6.6 H11" stroke="#ccc" stroke-width="1"/></svg>
<div class="abs" style="left:822px;top:477px;width:178px;height:140px;background:#454545;"></div>
<div class="abs" style="left:824px;top:482px;width:24px;height:24px;box-sizing:border-box;border:1px solid #ccc;background:#fbfbfb;"><div class="abs" style="left:1px;top:14px;width:5px;height:5px;border:1px solid #222;background:#fff;"></div><div class="abs" style="left:4px;top:17px;width:4px;height:4px;border:1px solid #222;background:#fff;"></div></div>
<div class="abs" style="left:851px;top:481px;width:25px;height:26px;box-sizing:border-box;border:1px solid #e8e8e8;padding:0;background:#555;"><div class="abs" style="left:1px;top:1px;width:21px;height:22px;border:1px solid #f0e8fa;box-sizing:border-box;background:radial-gradient(ellipse 120% 80% at 50% 118%,#7448cc 0,#8a4fd0 62%,transparent 68%),linear-gradient(180deg,#cdb2f0 0,#bb96e8 100%);"></div></div>
<div class="abs" style="left:985px;top:481px;width:10px;height:120px;background:#393939;"></div><div class="abs tri up" style="left:987.0px;top:486px;border-width:0 3px 4px 3px;"></div><div class="abs tri" style="left:987.0px;top:593px;border-width:4px 3px 0 3px;"></div>
<svg class="abs" style="left:826px;top:604px;" width="13" height="10" viewBox="0 0 13 10"><path d="M1 0 V8 M3.2 0 V8 M5.2 1.5 L7 8" stroke="#d4d4d4" stroke-width="1.4" fill="none"/><path d="M0 8.6 H8" stroke="#d4d4d4" stroke-width="1.1"/><path d="M8.5 7 L12 7 L10.2 9.6 Z" fill="#d4d4d4"/></svg>
<svg class="abs" style="left:928px;top:604px;" width="13" height="10" viewBox="0 0 13 10"><path d="M4.5 2 H2.5 Q0.5 2 0.5 5 Q0.5 8 2.5 8 H4.5 M8.5 2 H10.5 Q12.5 2 12.5 5 Q12.5 8 10.5 8 H8.5" fill="none" stroke="#d4d4d4" stroke-width="1.4"/><path d="M6.5 0 V3 M6.5 7 V10" stroke="#d4d4d4" stroke-width="1"/></svg>
<svg class="abs" style="left:948px;top:604px;" width="10" height="10" viewBox="0 0 10 10"><path d="M0.5 3.5 V9.5 H6.5" fill="none" stroke="#d4d4d4"/><rect x="2.5" y="0.5" width="7" height="7" fill="#d4d4d4"/></svg>
<svg class="abs" style="left:969px;top:604px;" width="9" height="10" viewBox="0 0 9 10"><path d="M0 2 H9 M3 2 V0.6 H6 V2" stroke="#d4d4d4" fill="none"/><path d="M1 3 H8 V10 H1 Z" fill="none" stroke="#d4d4d4"/><path d="M3.2 4.5 V8.5 M5.8 4.5 V8.5" stroke="#d4d4d4" stroke-width=".8"/></svg>
<div class="abs" style="left:822px;top:618px;width:178px;height:14px;background:#383838;"></div><div class="abs" style="left:822px;top:618px;width:29px;height:15px;background:#484848;"></div><div class="t" style="left:827px;top:618.5px;font-size:9.5px;color:#e4e4e4;">图层</div><div class="abs" style="left:852px;top:618px;width:28px;height:14px;background:#3f3f3f;"></div><div class="t" style="left:857px;top:618.5px;font-size:9.5px;color:#8c8c8c;">画板</div><svg class="abs" style="left:985px;top:622px;" width="11" height="8" viewBox="0 0 11 8"><path d="M0 1.5 L3.6 1.5 L1.8 4.2 Z" fill="#ccc"/><path d="M4.5 1 H11 M4.5 3.8 H11 M4.5 6.6 H11" stroke="#ccc" stroke-width="1"/></svg>
<div class="abs" style="left:822px;top:632px;width:178px;height:120px;background:#454545;"></div>
<div class="abs" style="left:824px;top:637px;width:170px;height:16px;background:#56627a;"></div>
<div class="abs" style="left:841px;top:637px;width:1px;height:16px;background:#47546a;"></div><div class="abs" style="left:855px;top:637px;width:1px;height:16px;background:#47546a;"></div>
<svg class="abs" style="left:827px;top:642px;" width="11" height="7" viewBox="0 0 11 7"><path d="M0.3 3.5 Q5.5 -2 10.7 3.5 Q5.5 9 0.3 3.5 Z" fill="#b4b4b4"/><circle cx="5.5" cy="3.3" r="1.9" fill="#3a3a3a"/><circle cx="6.2" cy="2.6" r="0.7" fill="#b4b4b4"/></svg>
<div class="abs" style="left:858px;top:637px;width:2px;height:16px;background:#3f86f0;"></div>
<svg class="abs" style="left:866px;top:642px;" width="5" height="7" viewBox="0 0 5 7"><path d="M0 0 L5 3.5 L0 7 Z" fill="#e0e0e0"/></svg>
<div class="abs" style="left:878px;top:639px;width:13px;height:12px;background:#fff;"><div class="abs" style="left:4px;top:3px;width:4px;height:5px;background:#9a70d0;"></div><div class="abs" style="left:2px;top:9px;width:9px;height:1.5px;background:#222;"></div></div>
<div class="t" style="left:897px;top:638px;font-size:9.5px;color:#f0f0f0;">图层 1</div>
<div class="abs" style="left:970px;top:642px;width:6px;height:6px;border-radius:4px;border:1px solid #ddd;box-sizing:border-box;"></div>
<div class="abs" style="left:984px;top:642.5px;width:5px;height:5px;background:#3f7ae8;border:1px solid #9cc0ff;box-sizing:border-box;"></div>
<div class="abs" style="left:990px;top:637px;width:0;height:0;border-style:solid;border-width:0 4px 4px 0;border-color:transparent #eee transparent transparent;"></div>
<div class="t" style="left:833px;top:740px;font-size:9.5px;color:#f0f0f0;overflow:hidden;height:9px;line-height:9px;">1 个图层</div><div class="abs" style="left:833px;top:728px;width:1px;height:13px;background:#bdbdbd;"></div>
<div class="abs" style="left:835px;top:739.5px;width:112px;height:1.5px;background:repeating-linear-gradient(90deg,#e0e0e0 0 9px,transparent 9px 12px);opacity:.75;"></div>
<svg class="abs" style="left:900px;top:738px;" width="10" height="8" viewBox="0 0 10 8"><circle cx="4" cy="3.5" r="2.6" fill="none" stroke="#ccc"/><path d="M6 5.5 L9 8" stroke="#ccc" stroke-width="1.3"/></svg>
<svg class="abs" style="left:948px;top:739px;" width="10" height="10" viewBox="0 0 10 10"><path d="M0.5 3.5 V9.5 H6.5" fill="none" stroke="#d4d4d4"/><rect x="2.5" y="0.5" width="7" height="7" fill="#d4d4d4"/></svg>
<svg class="abs" style="left:969px;top:739px;" width="9" height="10" viewBox="0 0 9 10"><path d="M0 2 H9 M3 2 V0.6 H6 V2" stroke="#666" fill="none"/><path d="M1 3 H8 V10 H1 Z" fill="none" stroke="#666"/><path d="M3.2 4.5 V8.5 M5.8 4.5 V8.5" stroke="#666" stroke-width=".8"/></svg>
<div class="abs" style="left:822px;top:754px;width:178px;height:14px;background:#383838;"></div><div class="abs" style="left:822px;top:754px;width:34px;height:15px;background:#484848;"></div><div class="t" style="left:832px;top:754px;font-size:9.5px;color:#e4e4e4;">变换</div><div class="abs" style="left:857px;top:754px;width:27px;height:14px;background:#3f3f3f;"></div><div class="t" style="left:861px;top:754px;font-size:9.5px;color:#8c8c8c;">对齐</div><div class="abs" style="left:885px;top:754px;width:59px;height:14px;background:#3f3f3f;"></div><div class="t" style="left:891px;top:754px;font-size:9.5px;color:#8c8c8c;">路径查找器</div><svg class="abs" style="left:985px;top:758px;" width="11" height="8" viewBox="0 0 11 8"><path d="M0 1.5 L3.6 1.5 L1.8 4.2 Z" fill="#ccc"/><path d="M4.5 1 H11 M4.5 3.8 H11 M4.5 6.6 H11" stroke="#ccc" stroke-width="1"/></svg>
<svg class="abs" style="left:824px;top:757px;" width="5" height="8" viewBox="0 0 5 8"><path d="M2.5 0 L5 3 H0 Z M2.5 8 L5 5 H0 Z" fill="#ccc"/></svg>
<!--DK_END-->
<!--ST_BEGIN-->
<div class="abs" style="left:33px;top:756px;width:330px;height:12px;background:#484848;"></div>
<div class="abs" style="left:362px;top:756px;width:443px;height:12px;background:#2f2f2f;"></div>
<div class="abs inp" style="left:36px;top:757px;width:32px;height:10px;line-height:10px;font-size:8.5px;background:#c4c4c4;padding-left:1px;">100%</div>
<div class="abs dd" style="left:71px;top:757px;height:10px;width:9px;"></div>
<svg class="abs" style="left:86px;top:759px;" width="22" height="7" viewBox="0 0 22 7"><path d="M0 0 H1.3 V7 H0 Z M7 0 L2 3.5 L7 7 Z M20 0 L15.5 3.5 L20 7 Z" fill="#6e6e6e"/></svg>
<div class="abs inp" style="left:115px;top:757px;width:32px;height:10px;line-height:10px;font-size:8.5px;background:#c4c4c4;padding-left:2px;">1</div>
<div class="abs dd" style="left:149px;top:757px;height:10px;width:9px;"></div>
<svg class="abs" style="left:166px;top:759px;" width="20" height="7" viewBox="0 0 20 7"><path d="M0 0 L4.5 3.5 L0 7 Z M11 0 L16 3.5 L11 7 Z M16.7 0 H18 V7 H16.7 Z" fill="#6e6e6e"/></svg>
<div class="t" style="left:261px;top:755px;font-size:9.5px;color:#e6e6e6;">选择</div>
<svg class="abs" style="left:353px;top:759px;" width="5" height="7" viewBox="0 0 5 7"><path d="M0 0 L5 3.5 L0 7 Z" fill="#cfcfcf"/></svg>
<svg class="abs" style="left:366px;top:759px;" width="5" height="7" viewBox="0 0 5 7"><path d="M5 0 L0 3.5 L5 7 Z" fill="#e0e0e0"/></svg>
<div class="abs" style="left:578px;top:758px;width:12px;height:10px;background:#8c8c8c;"></div>
<svg class="abs" style="left:795px;top:759px;" width="5" height="7" viewBox="0 0 5 7"><path d="M0 0 L5 3.5 L0 7 Z" fill="#e0e0e0"/></svg>
<div class="abs tri up" style="left:808px;top:71px;border-width:0 3.5px 4px 3.5px;"></div>
<div class="abs tri" style="left:808px;top:748px;border-width:4px 3.5px 0 3.5px;"></div>
<div class="abs" style="left:806px;top:405px;width:11px;height:12px;background:#a8a8a8;"></div>
<div class="abs" style="left:0;top:768px;width:1000px;height:2px;background:#1d2836;"></div>
<!--ST_END-->
</div></body>
</html>
